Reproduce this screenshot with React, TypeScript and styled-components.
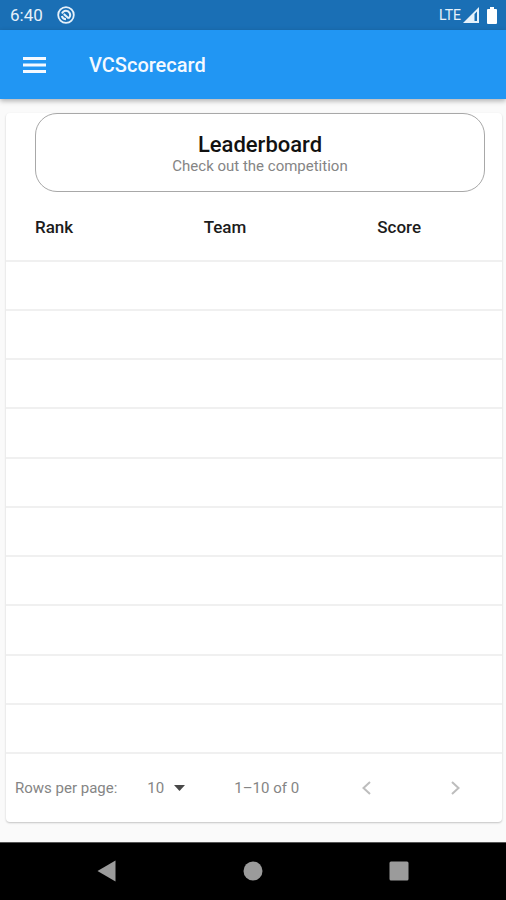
import React from "react";
import styled, { createGlobalStyle } from "styled-components";

const GlobalStyle = createGlobalStyle`
  *, *::before, *::after { box-sizing: border-box; }
  body {
    margin: 0;
    background: #fafafa;
    font-family: Roboto, "Liberation Sans", sans-serif;
  }
  button, select { font: inherit; color: inherit; }
`;

const Screen = styled.div`
  display: flex;
  flex-direction: column;
  min-height: 100vh;
`;

const StatusBar = styled.div`
  display: flex;
  align-items: center;
  height: 30px;
  padding: 0 9px 0 10px;
  background: #1a6fb5;
  color: #e6f1fa;
  font-size: 17px;
`;

const StatusIcon = styled.svg`
  display: block;
  width: 18px;
  height: 18px;
  margin-left: 14px;
`;

const Network = styled.div`
  display: flex;
  align-items: center;
  gap: 2px;
  margin-left: auto;
  font-size: 14px;
`;

const Signal = styled.svg`
  display: block;
  width: 16px;
  height: 16px;
`;

const Battery = styled.svg`
  display: block;
  width: 10px;
  height: 17px;
  margin-left: 6px;
`;

const AppBar = styled.header`
  display: flex;
  align-items: center;
  gap: 43px;
  height: 69px;
  padding: 0 23px;
  background: #2196f3;
  color: #f4f9ff;
  box-shadow: 0 2px 5px rgba(0, 0, 0, 0.3);
`;

const IconButton = styled.button`
  display: flex;
  padding: 0;
  border: 0;
  background: none;
  cursor: pointer;
`;

const AppTitle = styled.h1`
  margin: 0;
  font-size: 20px;
  font-weight: 500;
`;

const Card = styled.main`
  margin: 14px 4px 20px 6px;
  border-radius: 4px;
  background: #fff;
  box-shadow: 0 1px 2px rgba(0, 0, 0, 0.22);
`;

const Banner = styled.section`
  display: flex;
  flex-direction: column;
  align-items: center;
  justify-content: center;
  height: 79px;
  margin: 0 17px 0 29px;
  padding-top: 3px;
  border: 1px solid #a8a8a8;
  border-radius: 22px;
`;

const BannerTitle = styled.h2`
  margin: 0;
  color: #111;
  font-size: 22px;
  font-weight: 500;
  line-height: 24px;
`;

const BannerText = styled.p`
  margin: 0;
  color: #858585;
  font-size: 15px;
  line-height: 18px;
`;

const Table = styled.table`
  width: 100%;
  border-collapse: separate;
  border-spacing: 0;
  table-layout: fixed;
`;

const HeadCell = styled.th<{ $width: string }>`
  width: ${({ $width }) => $width};
  height: 70px;
  padding: 2px 0 0 29px;
  border-bottom: 2px solid #f0f0f0;
  color: #1c1c1c;
  font-size: 17px;
  font-weight: 500;
  text-align: left;
`;

const Row = styled.tr`
  height: 49px;
  &:nth-child(4n) { height: 50px; }
`;

const Cell = styled.td`
  padding: 0;
  border-bottom: 2px solid #f0f0f0;
`;

const Pager = styled.footer`
  display: flex;
  align-items: center;
  height: 68px;
  padding: 0 36px 0 9px;
  color: #858585;
  font-size: 15px;
`;

const PageSize = styled.label`
  display: flex;
  align-items: center;
  gap: 30px;
`;

const SelectBox = styled.span`
  display: flex;
  align-items: center;
`;

const Select = styled.select`
  width: 27px;
  padding: 0;
  border: 0;
  background: none;
  appearance: none;
`;

const PageRange = styled.span`
  margin-left: 49px;
`;

const PageButtons = styled.div`
  display: flex;
  justify-content: space-between;
  flex: 1;
  max-width: 110px;
  margin-left: auto;
  color: #bdbdbd;
`;

const NavBar = styled.nav`
  display: flex;
  flex: 1;
  align-items: center;
  justify-content: center;
  gap: 126px;
  min-height: 58px;
  padding-bottom: 2px;
  border-top: 1px solid #555;
  background: #000;
  color: #9b9b9b;
`;

const Icon = styled.svg`
  display: block;
  flex: none;
`;

const columns = [
  { name: "Rank", width: "34%" },
  { name: "Team", width: "35%" },
  { name: "Score", width: "31%" },
];
const rows = Array.from({ length: 10 }, (_, index) => index);

export default function App() {
  return (
    <Screen>
      <GlobalStyle />
      <StatusBar>
        <span>6:40</span>
        <StatusIcon viewBox="0 0 18 18" fill="none" stroke="currentColor" strokeWidth="2" aria-hidden="true">
          <circle cx="9" cy="9" r="7.8" strokeWidth="1.8" />
          <path d="M5 7.5C6.5 4.2 11 3.8 12.8 7.2C13.6 9 13 11 11.6 12.2" />
          <path d="M4.8 10C5.4 12 7 13.2 9 13.2M6.8 8L11.8 12.6" />
        </StatusIcon>
        <Network>
          <span>LTE</span>
          <Signal viewBox="0 0 16 16" fill="currentColor" aria-hidden="true">
            <path fillRule="evenodd" d="M0 16L16 0V16ZM11.5 7V14H14V4.4Z" />
          </Signal>
          <Battery viewBox="0 0 10 17" fill="#fff" aria-hidden="true">
            <path d="M3 0H7V2H9Q10 2 10 3V16Q10 17 9 17H1Q0 17 0 16V3Q0 2 1 2H3Z" />
          </Battery>
        </Network>
      </StatusBar>
      <AppBar>
        <IconButton aria-label="Open menu">
          <Icon width="23" height="16" viewBox="0 0 23 16" fill="currentColor">
            <path d="M0 0H23V3H0ZM0 6.5H23V9.5H0ZM0 13H23V16H0Z" />
          </Icon>
        </IconButton>
        <AppTitle>VCScorecard</AppTitle>
      </AppBar>
      <Card>
        <Banner>
          <BannerTitle>Leaderboard</BannerTitle>
          <BannerText>Check out the competition</BannerText>
        </Banner>
        <Table>
          <thead>
            <tr>
              {columns.map(({ name, width }) => (
                <HeadCell key={name} scope="col" $width={width}>{name}</HeadCell>
              ))}
            </tr>
          </thead>
          <tbody>
            {rows.map((row) => (
              <Row key={row}>
                {columns.map(({ name }) => <Cell key={name} />)}
              </Row>
            ))}
          </tbody>
        </Table>
        <Pager>
          <PageSize>
            Rows per page:
            <SelectBox>
              <Select defaultValue="10">
                <option>10</option>
                <option>25</option>
                <option>50</option>
              </Select>
              <Icon width="11" height="6" viewBox="0 0 11 6" fill="#484848" aria-hidden="true">
                <path d="M0 0H11L5.5 6Z" />
              </Icon>
            </SelectBox>
          </PageSize>
          <PageRange>1–10 of 0</PageRange>
          <PageButtons>
            <IconButton aria-label="Previous page">
              <Icon width="20" height="14" viewBox="0 0 20 14" fill="none" stroke="currentColor" strokeWidth="2">
                <path d="M14 1L7.5 7L14 13" />
              </Icon>
            </IconButton>
            <IconButton aria-label="Next page">
              <Icon width="20" height="14" viewBox="0 0 20 14" fill="none" stroke="currentColor" strokeWidth="2">
                <path d="M6 1L12.5 7L6 13" />
              </Icon>
            </IconButton>
          </PageButtons>
        </Pager>
      </Card>
      <NavBar>
        <IconButton aria-label="Back">
          <Icon width="20" height="22" viewBox="0 0 20 22" fill="currentColor">
            <path d="M18.5 0.5V21.5L0.5 11Z" />
          </Icon>
        </IconButton>
        <IconButton aria-label="Home">
          <Icon width="20" height="20" viewBox="0 0 20 20" fill="currentColor">
            <circle cx="10" cy="10" r="9.5" />
          </Icon>
        </IconButton>
        <IconButton aria-label="Recent apps">
          <Icon width="20" height="20" viewBox="0 0 20 20" fill="currentColor">
            <rect x="0.5" y="0.5" width="19" height="19" rx="1.5" />
          </Icon>
        </IconButton>
      </NavBar>
    </Screen>
  );
}
